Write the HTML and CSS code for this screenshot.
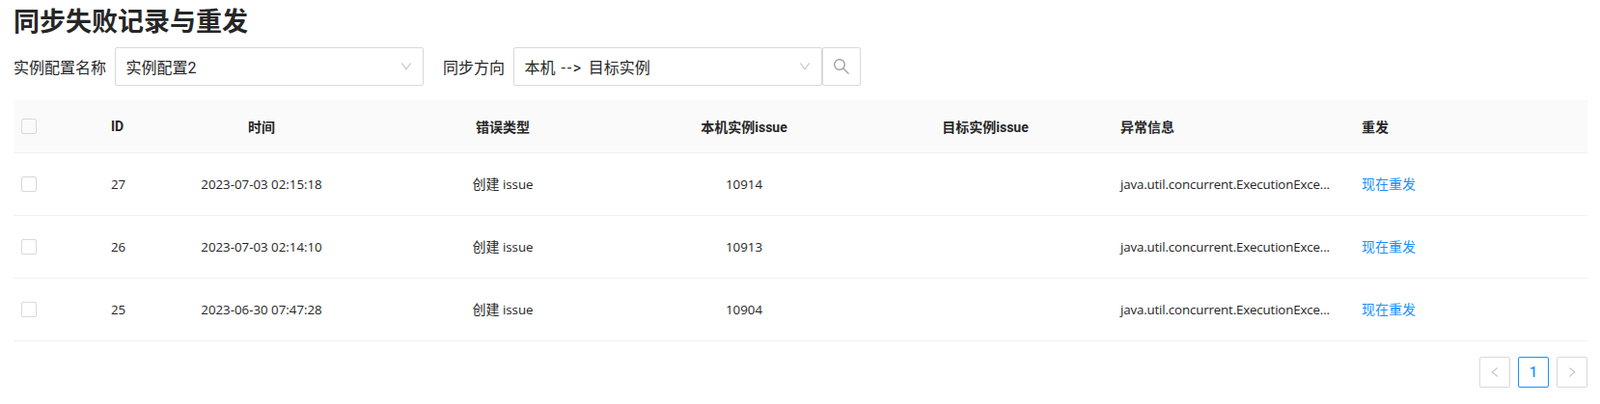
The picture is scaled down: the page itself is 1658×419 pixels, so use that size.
FILE: index.html
```html
<!DOCTYPE html>
<html lang="zh-CN">
<head>
  <meta charset="UTF-8" />
  <title>同步失败记录与重发</title>
  <link rel="stylesheet" href="styles.css">
</head>
<body>

<div class="container">
  <h2 class="page-title">同步失败记录与重发</h2>

  <!-- Search form -->
  <div class="search-form">
    <label class="form-label">实例配置名称</label>
    <div class="select">
      <span>实例配置2</span>
      <svg class="select-arrow" viewBox="64 64 896 896"><path d="M884 256h-75c-5.1 0-9.9 2.5-12.9 6.6L512 654.2 227.9 262.6c-3-4.1-7.8-6.6-12.9-6.6h-75c-6.5 0-10.3 7.4-6.5 12.7l352.6 486.1c12.8 17.6 39 17.6 51.7 0l352.6-486.1c3.9-5.3.1-12.7-6.4-12.7z"/></svg>
    </div>
    <label class="form-label second">同步方向</label>
    <div class="select">
      <span class="direction">本机 <span class="arrow">--&gt;</span> 目标实例</span>
      <svg class="select-arrow" viewBox="64 64 896 896"><path d="M884 256h-75c-5.1 0-9.9 2.5-12.9 6.6L512 654.2 227.9 262.6c-3-4.1-7.8-6.6-12.9-6.6h-75c-6.5 0-10.3 7.4-6.5 12.7l352.6 486.1c12.8 17.6 39 17.6 51.7 0l352.6-486.1c3.9-5.3.1-12.7-6.4-12.7z"/></svg>
    </div>
    <button class="search-btn">
      <svg viewBox="64 64 896 896"><path d="M909.6 854.5L649.9 594.8C690.2 542.7 712 479 712 412.3c0-79.8-31.2-154.7-87.6-211.1-56.4-56.4-131.4-87.6-211.1-87.6s-154.7 31.3-211.1 87.6C146.1 257.5 115 332.5 115 412.3c0 79.7 31.2 154.7 87.6 211.1 56.4 56.5 131.4 87.6 211.1 87.6 66.7 0 130.4-21.8 182.4-62l259.7 259.6a8.2 8.2 0 0 0 11.6 0l43.6-43.5a8.2 8.2 0 0 0 0-11.6zM570.4 570.4C528 612.7 471.8 636 412 636s-116-23.3-158.4-65.6C211.3 528 188 471.8 188 412s23.3-116.1 65.6-158.4C296 211.3 352.2 188 412 188s116.1 23.2 158.4 65.6S636 352.2 636 412s-23.3 116.1-65.6 158.4z"/></svg>
    </button>
  </div>

  <table class="record-table">
    <colgroup>
      <col class="col-check">
      <col class="col-id">
      <col class="col-wide"><col class="col-wide"><col class="col-wide">
      <col class="col-wide"><col class="col-wide"><col class="col-wide">
    </colgroup>
    <thead>
      <tr>
        <th><span class="checkbox"></span></th>
        <th>ID</th>
        <th class="center">时间</th>
        <th class="center">错误类型</th>
        <th class="center">本机实例issue</th>
        <th class="center">目标实例issue</th>
        <th>异常信息</th>
        <th>重发</th>
      </tr>
    </thead>
    <tbody>
      <tr>
        <td><span class="checkbox"></span></td>
        <td class="latin">27</td>
        <td class="center latin">2023-07-03 02:15:18</td>
        <td class="center">创建 <span class="latin">issue</span></td>
        <td class="center latin">10914</td>
        <td class="center"></td>
        <td class="latin message">java.util.concurrent.ExecutionExce...</td>
        <td><a href="#">现在重发</a></td>
      </tr>
      <tr>
        <td><span class="checkbox"></span></td>
        <td class="latin">26</td>
        <td class="center latin">2023-07-03 02:14:10</td>
        <td class="center">创建 <span class="latin">issue</span></td>
        <td class="center latin">10913</td>
        <td class="center"></td>
        <td class="latin message">java.util.concurrent.ExecutionExce...</td>
        <td><a href="#">现在重发</a></td>
      </tr>
      <tr>
        <td><span class="checkbox"></span></td>
        <td class="latin">25</td>
        <td class="center latin">2023-06-30 07:47:28</td>
        <td class="center">创建 <span class="latin">issue</span></td>
        <td class="center latin">10904</td>
        <td class="center"></td>
        <td class="latin message">java.util.concurrent.ExecutionExce...</td>
        <td><a href="#">现在重发</a></td>
      </tr>
    </tbody>
  </table>

  <!-- Pagination -->
  <ul class="pagination">
    <li class="page-item">
      <svg viewBox="64 64 896 896"><path d="M724 218.3V141c0-6.7-7.7-10.4-12.9-6.3L260.3 486.8a31.86 31.86 0 0 0 0 50.3l450.8 352.1c5.3 4.1 12.9.4 12.9-6.3v-77.3c0-4.9-2.3-9.6-6.1-12.6l-360-281 360-281.1c3.8-3 6.1-7.7 6.1-12.6z"/></svg>
    </li>
    <li class="page-item active">1</li>
    <li class="page-item">
      <svg viewBox="64 64 896 896"><path d="M765.7 486.8L314.9 134.7A7.97 7.97 0 0 0 302 141v77.3c0 4.9 2.3 9.6 6.1 12.6l360 281.1-360 281.1c-3.9 3-6.1 7.7-6.1 12.6V883c0 6.7 7.7 10.4 12.9 6.3l450.8-352.1a31.96 31.96 0 0 0 0-50.4z"/></svg>
    </li>
  </ul>
</div>

</body>
</html>
```

FILE: styles.css
```css
body {
  font-family: Roboto, "Noto Sans CJK SC", sans-serif;
  font-size: 14px;
  color: #262626;
  margin: 0;
  background-color: #ffffff;
}

.container {
  padding: 0 13px 0 14px;
}

.page-title {
  margin: 0;
  height: 49px;
  line-height: 47px;
  font-size: 27px;
  font-weight: 700;
}

.search-form {
  display: flex;
  align-items: center;
  height: 40px;
  margin-bottom: 15px;
  font-size: 16px;
}

.form-label {
  margin-right: 9px;
  white-space: nowrap;
}

.form-label.second {
  margin-left: 20px;
}

.select {
  box-sizing: border-box;
  width: 320px;
  height: 40px;
  padding: 0 11px 0 10.5px;
  display: flex;
  align-items: center;
  justify-content: space-between;
  border: 1px solid #d9d9d9;
  border-radius: 2px;
}

.direction {
  word-spacing: 2px;
}

.arrow {
  letter-spacing: 1.7px;
}

.select-arrow {
  width: 12px;
  height: 12px;
  fill: #bfbfbf;
}

.search-btn {
  box-sizing: border-box;
  width: 40px;
  height: 40px;
  padding: 0;
  display: flex;
  align-items: center;
  justify-content: center;
  background-color: #ffffff;
  border: 1px solid #d9d9d9;
  border-radius: 2px;
}

.search-btn svg {
  width: 18px;
  height: 18px;
  fill: #a6a6a6;
}

.record-table {
  width: 100%;
  table-layout: fixed;
  border-collapse: collapse;
}

.col-check { width: 85px; }
.col-id { width: 46px; }
.col-wide { width: 250px; }

.record-table th,
.record-table td {
  box-sizing: border-box;
  padding: 0 16px;
  text-align: left;
  border-bottom: 1px solid #f0f0f0;
}

.record-table th {
  height: 54px;
  background-color: #fafafa;
  font-weight: 700;
}

.record-table td {
  height: 65px;
  padding-bottom: 2px;
}

.record-table td.latin {
  padding-bottom: 0;
}

.record-table th:first-child,
.record-table td:first-child {
  padding: 0 8px;
}

.record-table .center {
  text-align: center;
  padding-left: 17px;
  padding-right: 15px;
}

.latin {
  font-family: "Open Sans", sans-serif;
  font-size: 13.3px;
  white-space: nowrap;
}

.message {
  letter-spacing: -0.15px;
}

.checkbox {
  display: block;
  box-sizing: border-box;
  width: 16px;
  height: 16px;
  border: 1px solid #d9d9d9;
  border-radius: 2px;
}

a {
  color: #1890ff;
  text-decoration: none;
}

.pagination {
  list-style: none;
  margin: 16px 0 0;
  padding: 0;
  display: flex;
  justify-content: flex-end;
  gap: 8px;
}

.page-item {
  box-sizing: border-box;
  width: 32px;
  height: 32px;
  display: flex;
  align-items: center;
  justify-content: center;
  border: 1px solid #d9d9d9;
  border-radius: 2px;
}

.page-item svg {
  width: 12px;
  height: 12px;
  fill: #bfbfbf;
}

.page-item.active {
  border-color: #1890ff;
  color: #1890ff;
  font-weight: 500;
}
```
